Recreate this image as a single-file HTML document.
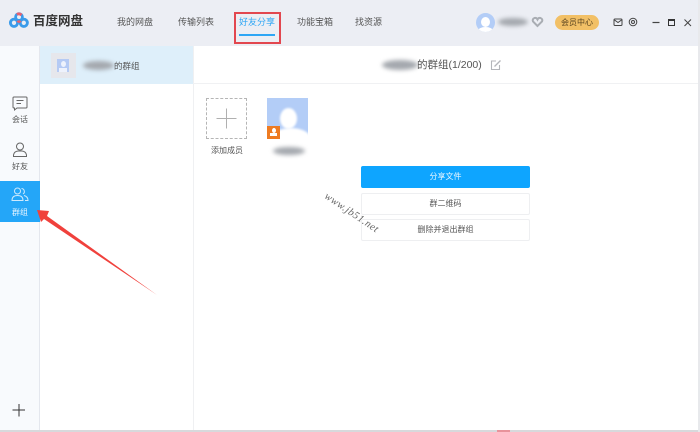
<!DOCTYPE html>
<html lang="zh"><head><meta charset="utf-8">
<style>
*{box-sizing:border-box}
html,body{margin:0;padding:0;width:700px;height:432px;overflow:hidden;background:#fff;font-family:"Liberation Sans","Noto Sans CJK SC",sans-serif;color:#444}
#r{position:absolute;left:0;top:0;width:700px;height:432px;overflow:hidden;filter:blur(.3px)}
.a{position:absolute;white-space:nowrap}
.nav{font-size:9px;top:16px;color:#555;line-height:12px}
.blur{position:absolute;background:#a4a8ae;border-radius:50%;filter:blur(2px)}
.btn{position:absolute;left:361px;width:169px;text-align:center;font-size:8px;border:1px solid #eeeff1;border-radius:2px;color:#555}
svg{position:absolute;overflow:visible}
</style></head><body><div id="r">
<div class="a" style="left:0;top:0;width:700px;height:46px;background:#eceef4"></div>
<div class="a" style="left:0;top:46px;width:40px;height:384px;background:#f8fafd"></div>
<div class="a" style="left:40px;top:46px;width:153px;height:38px;background:#deeffa"></div>
<div class="a" style="left:39px;top:46px;width:1px;height:384px;background:#e4e7ee"></div>
<div class="a" style="left:193px;top:46px;width:1px;height:384px;background:#eff0f2"></div>
<div class="a" style="left:193px;top:83px;width:507px;height:1px;background:#f0f1f3"></div>
<div class="a" style="left:0;top:430px;width:700px;height:2px;background:#d8d9dc"></div>
<div class="a" style="left:698px;top:0;width:2px;height:432px;background:#e8e9ec"></div>

<svg style="left:9px;top:12px" width="20" height="16" viewBox="0 0 20 16">
<circle cx="10" cy="5" r="3.400" fill="none" stroke="#3a9bea" stroke-width="2.800"/>
<circle cx="14.800" cy="10.800" r="3.600" fill="none" stroke="#3a9bea" stroke-width="2.900"/>
<circle cx="5" cy="10.800" r="3.600" fill="none" stroke="#3a9bea" stroke-width="2.900"/>
<path d="M7.500 9.500Q10 7 12.500 9.500Q10 12.500 7.500 9.500Z" fill="#e8606e"/>
<path d="M8 2.500Q10 1 12.500 3" fill="none" stroke="#e8606e" stroke-width="2.800"/>
</svg>
<div class="a" style="left:33px;top:13px;font-size:12.500px;font-weight:bold;line-height:16px;color:#333">百度网盘</div>
<div class="a nav" style="left:117px">我的网盘</div>
<div class="a nav" style="left:178px">传输列表</div>
<div class="a nav" style="left:239px;color:#2ea6f5">好友分享</div>
<div class="a nav" style="left:297px">功能宝箱</div>
<div class="a nav" style="left:355px">找资源</div>
<div class="a" style="left:239px;top:34px;width:36px;height:2px;background:#2ea6f5"></div>
<div class="a" style="left:234px;top:12px;width:47px;height:32px;border:2px solid #e2474f"></div>

<div class="a" style="left:476px;top:13px;width:19px;height:19px;border-radius:50%;background:#b3cdf7;overflow:hidden"><div class="a" style="left:5px;top:4px;width:9px;height:10px;border-radius:50%;background:#fff"></div><div class="a" style="left:2px;top:14px;width:15px;height:8px;border-radius:50%;background:#fff"></div></div>
<div class="blur" style="left:498px;top:18px;width:30px;height:8px"></div>
<svg style="left:532px;top:17px" width="11" height="10" viewBox="0 0 11 10"><path d="M5.500 9L1 4.500Q0 2 2.500 1Q4.500 .5 5.500 2.500Q6.500 .5 8.500 1Q11 2 10 4.500Z" fill="none" stroke="#a9adb3" stroke-width="2"/></svg>
<div class="a" style="left:555px;top:15px;width:44px;height:15px;border-radius:8px;background:#f2c066;font-size:8px;line-height:15px;text-align:center;color:#5b4520">会员中心</div>
<svg style="left:613px;top:17px" width="60" height="11" viewBox="0 0 60 11" fill="none" stroke="#444" stroke-width="1">
<rect x="1" y="2" width="8" height="6.500" rx="1"/><path d="M1.500 3L5 5.500L8.500 3"/>
<circle cx="20" cy="5" r="3.800"/><circle cx="20" cy="5" r="1.500"/>
<path d="M39.500 5.500h7" stroke-width="1.200"/>
</svg>
<div class="a" style="left:668px;top:19px;width:7px;height:7px;border:1px solid #333;border-top-width:2px"></div>
<svg style="left:684px;top:19px" width="8" height="8" viewBox="0 0 8 8"><path d="M.5 .5L7 7M7 .5L.5 7" stroke="#444" fill="none"/></svg>

<div class="a" style="left:51px;top:53px;width:25px;height:25px;background:#e6e7ec"></div>
<div class="a" style="left:57px;top:59px;width:12px;height:13px;background:#b5caf4"></div>
<div class="a" style="left:60.500px;top:61px;width:5px;height:6px;background:#eef2fc;border-radius:50%"></div>
<div class="a" style="left:59px;top:68px;width:8px;height:4px;background:#eef2fc"></div>
<div class="blur" style="left:83px;top:61px;width:31px;height:9px"></div>
<div class="a" style="left:114px;top:60px;font-size:8.500px;line-height:12px;color:#555">的群组</div>

<div class="blur" style="left:382px;top:60px;width:36px;height:10px"></div>
<div class="a" style="left:417px;top:58px;font-size:10.500px;line-height:14px;color:#555">的群组(1/200)</div>
<svg style="left:490px;top:59px" width="12" height="12" viewBox="0 0 12 12" fill="none" stroke="#b4b6ba" stroke-width="1.100"><path d="M9.500 6V10.500H1.500V2H6"/><path d="M4.500 7.500L10.500 1.500" stroke-width="1.300"/></svg>

<svg style="left:12px;top:96px" width="16" height="15" viewBox="0 0 16 15" fill="none" stroke="#666" stroke-width="1"><path d="M2 1H14Q15 1 15 2V11Q15 12 14 12H5L2.500 14V12H2Q1 12 1 11V2Q1 1 2 1Z"/><path d="M4.500 4.500H11.500M4.500 7.500H9"/></svg>
<div class="a" style="left:12px;top:114px;font-size:8px;line-height:11px;color:#555">会话</div>
<svg style="left:12px;top:142px" width="16" height="15" viewBox="0 0 16 15" fill="none" stroke="#666" stroke-width="1"><circle cx="8" cy="4.500" r="3.500"/><path d="M1.500 14.500V13Q2 9.500 6 9H10Q14 9.500 14.500 13V14.500Z"/></svg>
<div class="a" style="left:12px;top:161px;font-size:8px;line-height:11px;color:#555">好友</div>
<div class="a" style="left:0;top:181px;width:40px;height:41px;background:#24a6f8"></div>
<svg style="left:11px;top:187px" width="18" height="14" viewBox="0 0 18 14" fill="none" stroke="#cfeafd" stroke-width="1"><circle cx="6.500" cy="4" r="3"/><path d="M1 13.500Q1 8.500 6.500 8.500Q12 8.500 12 13.500Z"/><path d="M10.500 1.500A3 3 0 0 1 12 7M13 8.500Q17 9.500 17 13.500H14"/></svg>
<div class="a" style="left:12px;top:207px;font-size:8px;line-height:11px;color:#eaf6ff">群组</div>
<svg style="left:12px;top:403px" width="14" height="14" viewBox="0 0 14 14"><path d="M7 1V13.500M.5 7H13" stroke="#333" fill="none"/></svg>

<div class="a" style="left:206px;top:98px;width:41px;height:41px;border:1px dashed #b5b5b5"></div>
<svg style="left:216px;top:108px" width="21" height="21" viewBox="0 0 21 21"><path d="M10.500 .5V20.500M.5 10.500H20.500" stroke="#b0b0b0" fill="none"/></svg>
<div class="a" style="left:211px;top:145px;font-size:8px;line-height:11px;color:#555">添加成员</div>
<div class="a" style="left:267px;top:98px;width:41px;height:41px;background:#b3cdf7;overflow:hidden">
<div class="a" style="left:13px;top:10px;width:17px;height:21px;border-radius:50%;background:#fff;filter:blur(1px)"></div>
<div class="a" style="left:4px;top:30px;width:40px;height:22px;border-radius:50%;background:#fff;filter:blur(1px)"></div>
</div>
<div class="a" style="left:267px;top:126px;width:13px;height:13px;background:#ee7b22"></div>
<div class="a" style="left:271.500px;top:128px;width:4px;height:5px;background:#fff;border-radius:50%"></div>
<div class="a" style="left:270px;top:133px;width:7px;height:3px;background:#fff"></div>
<div class="blur" style="left:273px;top:147px;width:32px;height:8px"></div>

<div class="btn" style="top:166px;height:22px;line-height:20px;background:#0ea5ff;border-color:#0ea5ff;color:#e6f5ff">分享文件</div>
<div class="btn" style="top:193px;height:22px;line-height:20px">群二维码</div>
<div class="btn" style="top:219px;height:22px;line-height:20px">删除并退出群组</div>

<div class="a" style="left:325px;top:190px;font-family:'Liberation Serif',serif;font-style:italic;font-size:10.500px;line-height:12px;color:#666;transform:rotate(34deg);transform-origin:0 50%;letter-spacing:.5px">www.jb51.net</div>

<svg style="left:30px;top:200px" width="135" height="100" viewBox="30 200 135 100"><path d="M37 210L49 211L47 216L157 295L44 219L41 222Z" fill="#f0413c"/></svg>
<div class="a" style="left:497px;top:430px;width:13px;height:2px;background:#e8939b"></div>
</div></body></html>
